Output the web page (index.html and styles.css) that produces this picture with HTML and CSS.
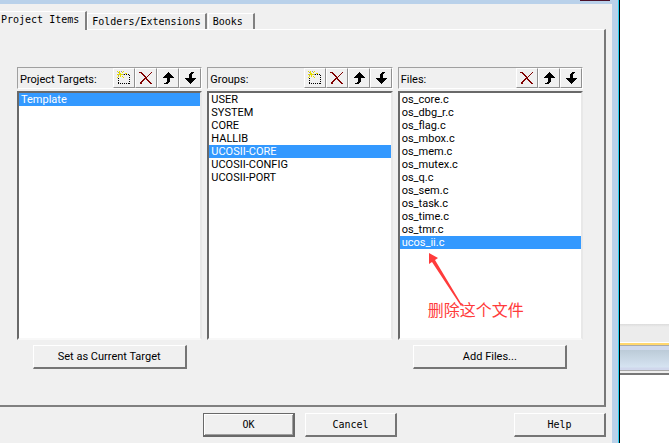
FILE: index.html
```html
<!DOCTYPE html>
<html lang="en">
<head>
<meta charset="utf-8">
<title>Components</title>
<link rel="stylesheet" href="styles.css">
</head>
<body>
<svg class="symbols" aria-hidden="true">
  <symbol id="new" viewBox="0 0 16 16">
    <path d="M8 4.500h6M13.500 5v9M2 13.500h12M2.500 8v6" fill="none" stroke="#000" stroke-dasharray="1 1"/>
    <path d="M3 1h1v2h1v1h2v1H5v2H4V5H1V4h2zM1 1h1v1H1zM6 2h1v1H6zM7 1h1v1H7zM9 3h2v1H9zM1 7h1v1H1zM2 6h1v1H2zM6 6h1v1H6zM7 7h1v1H7z" fill="#e6dc00"/>
    <path d="M2 2h1v1H2zM5 1h1v1H5zM2 5h1v1H2zM7 4h1v1H7z" fill="#999"/>
  </symbol>
  <symbol id="delete" viewBox="0 0 16 16">
    <path d="M1 2h3v1h1v1h1v1h1v1h1v1h1V6h1V5h1V4h1V3h1V2h1v1h-1v1h-1v1h-1v1h-1v1H9v2h1v1h1v1h1v1h1v1h1v1h-2v-1h-1v-1h-1v-1H9v-1H8V9H7v1H6v1H5v1H4v2H2v-2h1v-1h1v-1h1V9h1V8h1V7H6V6H5V5H4V4H3V3H1z" fill="#800000"/>
  </symbol>
  <symbol id="up" viewBox="0 0 16 16">
    <path d="M8 2h1v1h1v1h1v1h1v1h1v1h1v1h-4v4H9v1H8v1H4v-1h2v-1h1V8H3V7h1V6h1V5h1V4h1V3h1z"/>
  </symbol>
  <symbol id="down" viewBox="0 0 16 16">
    <path d="M9 2h3v1h-1v1h-1v4h4v1h-1v1h-1v1h-1v1h-1v1H9v1H8v-1H7v-1H6v-1H5v-1H4V9H3V8h4V4h1V3h1z"/>
  </symbol>
</svg>
<div class="screen">
  <main class="dialog">
    <div class="titlebar"><span class="close"></span></div>
    <div class="client">
      <div class="tabs" role="tablist">
        <button class="tab active" role="tab" aria-selected="true">Project Items</button>
        <button class="tab" role="tab">Folders/Extensions</button>
        <button class="tab last" role="tab">Books</button>
      </div>
      <section class="page" role="tabpanel">
        <div class="column">
          <div class="toolbar">
            <label for="targets">Project Targets:</label>
            <button class="tool" aria-label="New"><svg><use href="#new"/></svg></button>
            <button class="tool" aria-label="Delete"><svg><use href="#delete"/></svg></button>
            <button class="tool" aria-label="Move up"><svg><use href="#up"/></svg></button>
            <button class="tool" aria-label="Move down"><svg><use href="#down"/></svg></button>
          </div>
          <select class="list" id="targets" size="18">
            <option selected>Template</option>
          </select>
          <button class="button wide">Set as Current Target</button>
        </div>
        <div class="column">
          <div class="toolbar">
            <label for="groups">Groups:</label>
            <button class="tool" aria-label="New"><svg><use href="#new"/></svg></button>
            <button class="tool" aria-label="Delete"><svg><use href="#delete"/></svg></button>
            <button class="tool" aria-label="Move up"><svg><use href="#up"/></svg></button>
            <button class="tool" aria-label="Move down"><svg><use href="#down"/></svg></button>
          </div>
          <select class="list" id="groups" size="18">
            <option>USER</option>
            <option>SYSTEM</option>
            <option>CORE</option>
            <option>HALLIB</option>
            <option selected>UCOSII-CORE</option>
            <option>UCOSII-CONFIG</option>
            <option>UCOSII-PORT</option>
          </select>
        </div>
        <div class="column">
          <div class="toolbar">
            <label for="files">Files:</label>
            <button class="tool" aria-label="Delete"><svg><use href="#delete"/></svg></button>
            <button class="tool" aria-label="Move up"><svg><use href="#up"/></svg></button>
            <button class="tool" aria-label="Move down"><svg><use href="#down"/></svg></button>
          </div>
          <select class="list" id="files" size="18">
            <option>os_core.c</option>
            <option>os_dbg_r.c</option>
            <option>os_flag.c</option>
            <option>os_mbox.c</option>
            <option>os_mem.c</option>
            <option>os_mutex.c</option>
            <option>os_q.c</option>
            <option>os_sem.c</option>
            <option>os_task.c</option>
            <option>os_time.c</option>
            <option>os_tmr.c</option>
            <option selected>ucos_ii.c</option>
          </select>
          <button class="button wide">Add Files...</button>
          <div class="note" lang="zh">
            <svg class="pointer" viewBox="0 0 34 53"><path d="M1 0l9 5-3 2 27 45-1 1L4 9 1 11z" fill="#ff3b3b"/></svg>
            <span>删除这个文件</span>
          </div>
        </div>
      </section>
      <footer class="actions">
        <button class="button default">OK</button>
        <button class="button">Cancel</button>
        <button class="button help">Help</button>
      </footer>
    </div>
  </main>
  <aside class="backdrop">
    <div class="strip"></div>
    <div class="bar"></div>
  </aside>
</div>
</body>
</html>
```
FILE: styles.css
```css
* { box-sizing: border-box; }

body {
  margin: 0;
  background: #fff;
  color: #000;
  font: 11px/13px Roboto, "Liberation Sans", sans-serif;
}

button {
  margin: 0;
  padding: 0;
  border: 0;
  color: inherit;
  font: inherit;
}

.symbols { display: none; }

.screen {
  display: grid;
  grid-template-columns: 1fr 49px;
  min-height: 100vh;
}

.dialog {
  display: flex;
  flex-direction: column;
  border-right: 1px solid #000;
  border-bottom: 1px solid #b9d1ea;
  box-shadow: inset -1px 0 #28d0f0;
  background: #b9d1ea;
  padding-right: 7px;
}

.titlebar {
  display: flex;
  justify-content: flex-end;
  height: 4px;
}

.close {
  width: 30px;
  height: 1px;
  margin-right: 2px;
  background: #4c1028;
}

.client {
  flex: 1;
  padding: 7px 6px 6px 0;
  background: #f0f0f0;
}

.tabs {
  display: flex;
  align-items: flex-end;
  height: 18px;
}

.tab {
  height: 16px;
  padding: 0 4px;
  border-top: 1px solid #fff;
  border-left: 1px solid #fff;
  border-right: 2px solid #808080;
  background: #f0f0f0;
  font: 10px/16px "DejaVu Sans Mono", monospace;
}

.tab.active {
  z-index: 1;
  height: 19px;
  margin-bottom: -1px;
  padding: 0 6px 3px 1px;
  border-left: 0;
}

.tab.last {
  margin-left: 1px;
  padding-right: 10px;
}

.page {
  display: grid;
  grid-template-columns: repeat(3, 1fr);
  gap: 5px;
  padding: 37px 21px 36px 17px;
  border: 2px solid #808080;
  border-top: 1px solid #fff;
  border-left: 0;
  border-right-color: #787878;
}

.column {
  position: relative;
  display: flex;
  flex-direction: column;
  align-items: center;
}

.toolbar {
  display: flex;
  align-items: center;
  width: 100%;
  height: 22px;
  margin-bottom: 2px;
  border: 1px solid #a0a0a0;
  border-right-color: #fff;
  border-bottom-color: #fff;
}

.toolbar label {
  flex: 1;
  padding: 2px 0 0 2px;
}

.tool {
  display: grid;
  place-items: center;
  width: 22px;
  height: 20px;
  border: 1px solid #fff;
  border-right-color: #909090;
  border-bottom-color: #909090;
  background: #f0f0f0;
}

.tool svg {
  width: 16px;
  height: 16px;
  shape-rendering: crispEdges;
}

.list {
  width: 100%;
  height: 249px;
  margin: 0;
  padding: 0;
  border: 2px solid #696969;
  border-right-color: #e8e8e8;
  border-bottom-color: #f8f8f8;
  border-radius: 0;
  outline: 0;
  background: #fff;
  color: #000;
  font: inherit;
  overflow: hidden;
}

.list option {
  height: 13px;
  min-height: 13px;
  padding: 0 2px;
  line-height: 13px;
}

.list option:checked {
  background: linear-gradient(#39f, #39f);
  color: #fff;
}

.button {
  width: 92px;
  height: 24px;
  border: 1px solid #fff;
  border-right: 2px solid #757575;
  border-bottom: 2px solid #757575;
  background: #f0f0f0;
  font: 10px/20px "DejaVu Sans Mono", monospace;
}

.button.wide {
  width: 154px;
  margin-top: 5px;
  font: inherit;
}

.button.default {
  border: 1px solid #696969;
  border-right-width: 2px;
  border-bottom-width: 2px;
  box-shadow: inset 1px 1px #fff, inset -1px -1px #a0a0a0;
}

.note {
  position: absolute;
  top: 186px;
  left: 30px;
  color: #ff3b3b;
  font: 16px/20px "Noto Sans CJK SC", sans-serif;
  white-space: nowrap;
  pointer-events: none;
}

.pointer {
  display: block;
  width: 34px;
  height: 53px;
  margin-bottom: -7px;
}

.actions {
  display: flex;
  gap: 10px;
  padding: 6px 0 0 203px;
}

.help { margin-left: auto; }

.backdrop { padding-top: 324px; }

.strip {
  height: 19px;
  border-bottom: 1px solid #fff;
  background: linear-gradient(#dcdcdc, #ececec 3px);
}

.bar {
  height: 32px;
  border-top: 2px solid #ffd76e;
  border-bottom: 2px solid #777;
  background: linear-gradient(#aaa 1px, #d0d9ec 1px, #d0d9ec 5px, #bccbd8 5px, #d5e3f1 22px, #d0d7ec 23px, #d0d7ec 25px, #aaa 25px, #aaa 26px, #eee 26px);
}
```
